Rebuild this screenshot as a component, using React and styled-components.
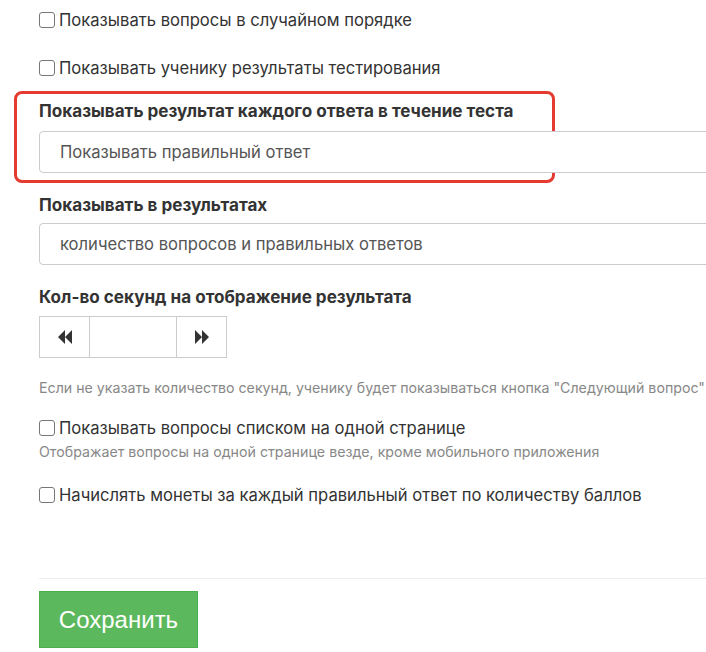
import React from "react";
import styled, { createGlobalStyle } from "styled-components";

const Global = createGlobalStyle`
  html, body { margin: 0; padding: 0; background: #fff; overflow: hidden; }
  body { font-family: Inter, "Noto Sans", sans-serif; color: #333; }
  * { box-sizing: border-box; }
`;

const Page = styled.div`
  width: 706px;
  height: 652px;
  overflow: hidden;
  padding: 0 0 0 39px;
  display: flex;
  flex-direction: column;
`;

const CheckRow = styled.label`
  display: flex;
  align-items: center;
  gap: 4px;
  font-size: 16.6px;
  color: #333;
  height: 20px;
  white-space: nowrap;
  margin-top: ${(p) => p.$mt}px;
`;

const Box = styled.span`
  width: 16px;
  height: 16px;
  border: 1px solid #767676;
  border-radius: 3px;
  flex: none;
  background: #fff;
`;

const Highlight = styled.div`
  margin: 13px 0 0 -25px;
  width: 541px;
  height: 92px;
  border: 3px solid #e53a2f;
  border-radius: 8px;
  padding: 7px 0 0 22px;
  overflow: visible;
`;

const Label = styled.div`
  font-size: 17.1px;
  font-weight: 700;
  color: #333;
  height: 20px;
  line-height: 20px;
  white-space: nowrap;
`;

const Select = styled.div`
  margin-top: ${(p) => p.$mt}px;
  width: 720px;
  height: 42px;
  border: 1px solid #ccc;
  border-radius: 4px;
  padding: 0 20px;
  display: flex;
  align-items: center;
  font-size: 16.6px;
  color: #555;
  background: #fff;
  white-space: nowrap;
`;

const Group = styled.div`
  margin-top: ${(p) => p.$mt}px;
`;

const Spinner = styled.div`
  margin-top: 9px;
  display: flex;
  width: 188px;
  height: 42px;
  border: 1px solid #ccc;
`;

const SpinBtn = styled.div`
  width: 49px;
  display: flex;
  align-items: center;
  justify-content: center;
  color: #333;
`;

const SpinInput = styled.div`
  flex: 1;
  border-left: 1px solid #ccc;
  border-right: 1px solid #ccc;
`;

const Help = styled.div`
  font-size: 14.2px;
  color: #888;
  height: 18px;
  line-height: 18px;
  margin-top: ${(p) => p.$mt}px;
  white-space: nowrap;
`;

const Divider = styled.div`
  margin-top: 73px;
  height: 1px;
  background: #eee;
  width: 700px;
`;

const SaveButton = styled.button`
  margin-top: 12px;
  width: 159px;
  height: 57px;
  background: #5cb85c;
  border: 1px solid #4cae4c;
  border-radius: 0;
  color: #fff;
  font-family: "Liberation Sans", Arial, sans-serif;
  font-size: 24px;
  padding: 0;
`;

const Rewind = ({ dir }) => (
  <svg width="16" height="14" viewBox="0 0 16 14">
    {dir === "left" ? (
      <path d="M8 0 L1 7 L8 14 Z M15 0 L8 7 L15 14 Z" fill="#333" />
    ) : (
      <path d="M1 0 L8 7 L1 14 Z M8 0 L15 7 L8 14 Z" fill="#333" />
    )}
  </svg>
);

export default function App() {
  return (
    <>
      <Global />
      <Page>
        <CheckRow $mt={10}>
          <Box />
          Показывать вопросы в случайном порядке
        </CheckRow>
        <CheckRow $mt={28}>
          <Box />
          Показывать ученику результаты тестирования
        </CheckRow>
        <Highlight>
          <Label>Показывать результат каждого ответа в течение теста</Label>
          <Select $mt={10}>Показывать правильный ответ</Select>
        </Highlight>
        <Group $mt={12}>
          <Label>Показывать в результатах</Label>
          <Select $mt={8}>количество вопросов и правильных ответов</Select>
        </Group>
        <Group $mt={22}>
          <Label>Кол-во секунд на отображение результата</Label>
          <Spinner>
            <SpinBtn><Rewind dir="left" /></SpinBtn>
            <SpinInput />
            <SpinBtn><Rewind dir="right" /></SpinBtn>
          </Spinner>
        </Group>
        <Help $mt={21}>
          Если не указать количество секунд, ученику будет показываться кнопка "Следующий вопрос"
        </Help>
        <CheckRow $mt={21}>
          <Box />
          Показывать вопросы списком на одной странице
        </CheckRow>
        <Help $mt={5}>Отображает вопросы на одной странице везде, кроме мобильного приложения</Help>
        <CheckRow $mt={24}>
          <Box />
          Начислять монеты за каждый правильный ответ по количеству баллов
        </CheckRow>
        <Divider />
        <SaveButton>Сохранить</SaveButton>
      </Page>
    </>
  );
}
